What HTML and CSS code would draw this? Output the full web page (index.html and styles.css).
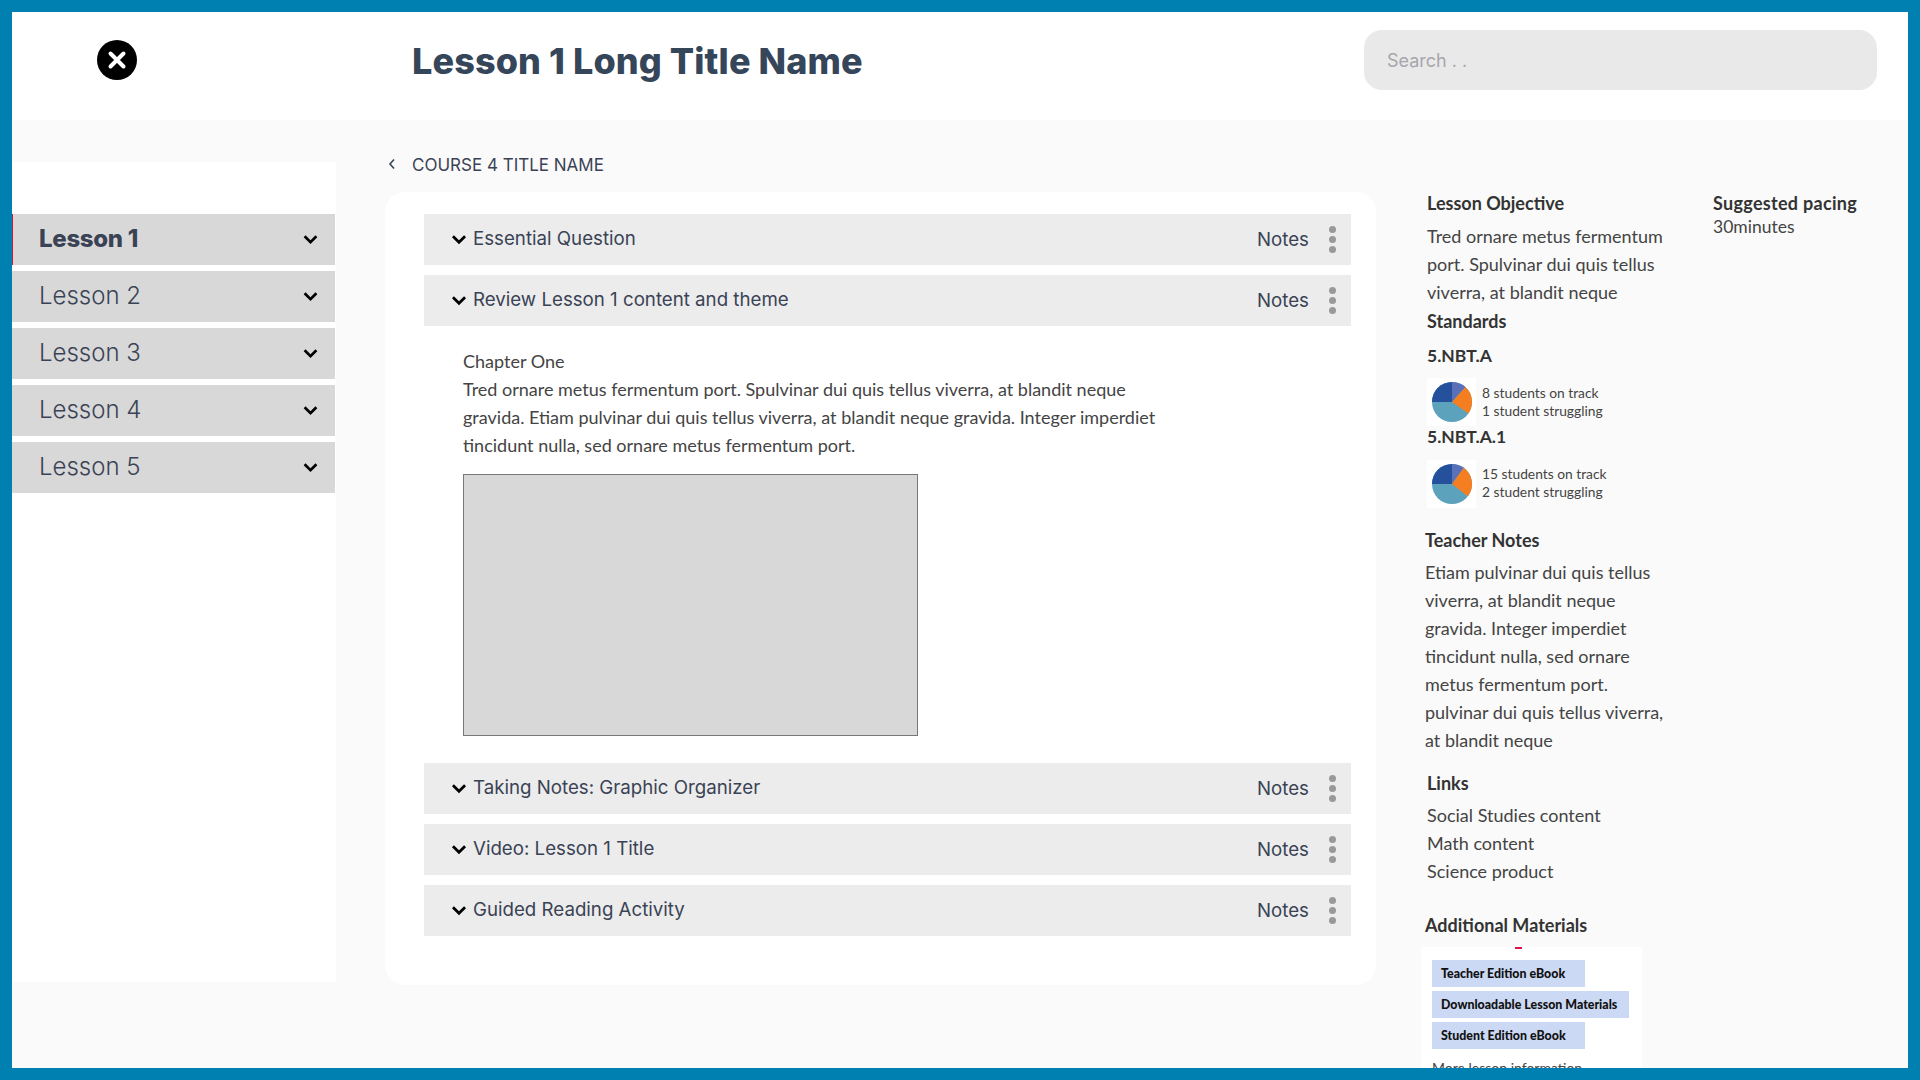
FILE: index.html
```html
<!DOCTYPE html>
<html lang="en">
<head>
<meta charset="utf-8">
<title>Lesson 1 Long Title Name</title>
<link rel="stylesheet" href="styles.css">
</head>
<body>
<div class="frame">
  <header class="topbar">
    <div class="close-wrap">
      <svg class="close-icon" viewBox="0 0 40 40"><circle cx="20" cy="20" r="20" fill="#000"/><path d="M13.5 13.5l13 13M26.5 13.5l-13 13" stroke="#fff" stroke-width="4" stroke-linecap="round"/></svg>
    </div>
    <h1 class="page-title">Lesson 1 Long Title Name</h1>
    <div class="search">Search . .</div>
  </header>
  <div class="workspace">
    <nav class="sidebar">
      <div class="lesson lesson-active"><span>Lesson 1</span><svg class="chev" viewBox="0 0 14 10"><path d="M1.5 2l5.5 5.5L12.5 2" /></svg></div>
      <div class="lesson"><span>Lesson 2</span><svg class="chev" viewBox="0 0 14 10"><path d="M1.5 2l5.5 5.5L12.5 2" /></svg></div>
      <div class="lesson"><span>Lesson 3</span><svg class="chev" viewBox="0 0 14 10"><path d="M1.5 2l5.5 5.5L12.5 2" /></svg></div>
      <div class="lesson"><span>Lesson 4</span><svg class="chev" viewBox="0 0 14 10"><path d="M1.5 2l5.5 5.5L12.5 2" /></svg></div>
      <div class="lesson"><span>Lesson 5</span><svg class="chev" viewBox="0 0 14 10"><path d="M1.5 2l5.5 5.5L12.5 2" /></svg></div>
    </nav>
    <main class="center">
      <div class="crumb">
        <svg class="crumb-chev" viewBox="0 0 8 12"><path d="M6 1.5L2 6l4 4.5"/></svg>
        <span>COURSE 4 TITLE NAME</span>
      </div>
      <section class="card">
        <div class="row"><svg class="chev row-chev" viewBox="0 0 14 10"><path d="M1.5 2l5.5 5.5L12.5 2" /></svg><span class="row-title">Essential Question</span><span class="notes">Notes</span><span class="dots"><i></i><i></i><i></i></span></div>
        <div class="row"><svg class="chev row-chev" viewBox="0 0 14 10"><path d="M1.5 2l5.5 5.5L12.5 2" /></svg><span class="row-title">Review Lesson 1 content and theme</span><span class="notes">Notes</span><span class="dots"><i></i><i></i><i></i></span></div>
        <div class="chapter">
          <p class="chapter-text">Chapter One<br>Tred ornare metus fermentum port. Spulvinar dui quis tellus viverra, at blandit neque<br>gravida. Etiam pulvinar dui quis tellus viverra, at blandit neque gravida. Integer imperdiet<br>tincidunt nulla, sed ornare metus fermentum port.</p>
          <div class="placeholder"></div>
        </div>
        <div class="row"><svg class="chev row-chev" viewBox="0 0 14 10"><path d="M1.5 2l5.5 5.5L12.5 2" /></svg><span class="row-title">Taking Notes: Graphic Organizer</span><span class="notes">Notes</span><span class="dots"><i></i><i></i><i></i></span></div>
        <div class="row"><svg class="chev row-chev" viewBox="0 0 14 10"><path d="M1.5 2l5.5 5.5L12.5 2" /></svg><span class="row-title">Video: Lesson 1 Title</span><span class="notes">Notes</span><span class="dots"><i></i><i></i><i></i></span></div>
        <div class="row"><svg class="chev row-chev" viewBox="0 0 14 10"><path d="M1.5 2l5.5 5.5L12.5 2" /></svg><span class="row-title">Guided Reading Activity</span><span class="notes">Notes</span><span class="dots"><i></i><i></i><i></i></span></div>
      </section>
    </main>
    <aside class="details">
      <div class="details-top">
        <div class="objective">
          <h2 class="label">Lesson Objective</h2>
          <p class="copy">Tred ornare metus fermentum<br>port. Spulvinar dui quis tellus<br>viverra, at blandit neque</p>
          <h2 class="label standards">Standards</h2>
          <h3 class="code code-first">5.NBT.A</h3>
          <div class="stat">
            <div class="pie-box"><svg class="pie" viewBox="0 0 40 40"><circle cx="20" cy="20" r="20" fill="#5da2bd"/><path d="M20 20V0A20 20 0 0 1 33.4 5.1Z" fill="#5a70b8"/><path d="M20 20L33.4 5.1A20 20 0 0 1 36.4 31.5Z" fill="#f57f20"/><path d="M20 20H0A20 20 0 0 1 20 0Z" fill="#25509c"/></svg></div>
            <div class="stat-text">8 students on track<br>1 student struggling</div>
          </div>
          <h3 class="code">5.NBT.A.1</h3>
          <div class="stat stat-second">
            <div class="pie-box"><svg class="pie" viewBox="0 0 40 40"><circle cx="20" cy="20" r="20" fill="#5da2bd"/><path d="M20 20V0A20 20 0 0 1 31.8 3.8Z" fill="#5a70b8"/><path d="M20 20L31.8 3.8A20 20 0 0 1 35.8 32.3Z" fill="#f57f20"/><path d="M20 20H0A20 20 0 0 1 20 0Z" fill="#25509c"/></svg></div>
            <div class="stat-text">15 students on track<br>2 student struggling</div>
          </div>
        </div>
        <div class="pacing">
          <h2 class="label label-wide">Suggested pacing</h2>
          <p class="pacing-value">30minutes</p>
        </div>
      </div>
      <div class="notes-block">
        <h2 class="label">Teacher Notes</h2>
        <p class="copy copy-tight">Etiam pulvinar dui quis tellus<br>viverra, at blandit neque<br>gravida. Integer imperdiet<br>tincidunt nulla, sed ornare<br>metus fermentum port.<br>pulvinar dui quis tellus viverra,<br>at blandit neque</p>
      </div>
      <div class="links-block">
        <h2 class="label">Links</h2>
        <p class="copy copy-tight">Social Studies content<br>Math content<br>Science product</p>
      </div>
      <div class="materials-block">
        <h2 class="label">Additional Materials</h2>
        <div class="materials">
          <span class="tick"></span>
          <div class="mat-btn">Teacher Edition eBook</div>
          <div class="mat-btn mat-wide">Downloadable Lesson Materials</div>
          <div class="mat-btn">Student Edition eBook</div>
          <p class="mat-more">More lesson information</p>
        </div>
      </div>
    </aside>
  </div>
</div>
</body>
</html>
```
FILE: styles.css
```css
* { box-sizing: border-box; }
html, body { margin: 0; padding: 0; height: 100%; overflow: hidden; }
body { font-family: "Lato", "Open Sans", sans-serif; color: #444; }
h1, h2, h3, p { margin: 0; }

.frame { width: 1920px; height: 1080px; border: 12px solid #0080b0; background: #fafafa; display: flex; flex-direction: column; overflow: hidden; }

.topbar { height: 108px; flex: none; background: #fff; display: flex; align-items: center; padding-bottom: 12px; }
.close-wrap { width: 400px; padding-left: 85px; display: flex; }
.close-icon { width: 40px; height: 40px; display: block; }
.page-title { font-family: "Inter", sans-serif; font-weight: 800; font-size: 36px; letter-spacing: 0.1px; color: #36465a; line-height: 44px; width: 952px; padding-top: 2px; height: 46px; white-space: nowrap; }
.search { width: 513px; height: 60px; background: #e9e9ea; border-radius: 18px; color: #a6a6ab; font-family: "Inter", sans-serif; font-size: 18px; display: flex; align-items: center; padding-left: 23px; }

.workspace { flex: 1; display: flex; min-height: 0; }

.sidebar { width: 324px; height: 820px; flex: none; margin-top: 42px; background: #fff; padding-top: 52px; display: flex; flex-direction: column; gap: 6px; }
.lesson { height: 51px; width: 323px; flex: none; background: #d8d8d8; display: flex; align-items: center; justify-content: space-between; padding: 0 17px 2px 27px; font-family: "Inter", sans-serif; font-weight: 300; font-size: 24px; color: #3a4355; }
.lesson .chev { margin-top: 2px; }
.lesson-active { font-weight: 800; letter-spacing: -0.3px; border-left: 1px solid #d8173c; padding-left: 26px; }
.chev { width: 15px; height: 11px; flex: none; fill: none; stroke: #000; stroke-width: 2.5; }

.center { width: 991px; flex: none; margin-left: 49px; display: flex; flex-direction: column; }
.crumb { height: 72px; flex: none; display: flex; align-items: center; gap: 16px; padding: 18px 0 0 3px; font-family: "Inter", sans-serif; font-size: 17px; color: #3a4355; }
.crumb-chev { width: 8px; height: 12px; fill: none; stroke: #3a4355; stroke-width: 1.6; margin-top: -3px; }
.card { background: #fff; border-radius: 20px; padding: 22px 25px 0 39px; height: 793px; display: flex; flex-direction: column; gap: 10px; }
.row { height: 51px; flex: none; background: #ececec; display: flex; align-items: center; padding: 0 15px 0 27px; font-family: "Inter", sans-serif; font-size: 18.7px; color: #3a4355; }
.row-chev { margin-right: 6px; width: 16px; }
.row-title { flex: 1; padding-bottom: 2px; }
.notes { width: 51px; margin-right: 21px; white-space: nowrap; }
.dots { display: flex; flex-direction: column; gap: 3px; width: 7px; }
.dots i { display: block; width: 7px; height: 7px; border-radius: 50%; background: #999; }

.chapter { padding: 11px 0 17px 39px; }
.chapter-text { font-size: 18px; line-height: 28px; color: #444; white-space: nowrap; }
.placeholder { width: 455px; height: 262px; margin-top: 15px; background: #d8d8d8; border: 1px solid #777; }

.details { flex: 1; margin-left: 51px; padding-top: 72px; min-width: 0; }
.details-top { display: flex; }
.objective { width: 286px; flex: none; }
.label { font-size: 18px; font-weight: 700; line-height: 22px; color: #333; white-space: nowrap; }
.label-wide { letter-spacing: 0.3px; }
.copy { font-size: 18px; line-height: 28px; color: #444; margin-top: 8px; white-space: nowrap; }
.copy-tight { margin-top: 7px; }
.standards { margin-top: 4px; }
.code { font-size: 17.5px; font-weight: 700; line-height: 22px; color: #333; }
.code-first { margin-top: 13px; }
.stat { display: flex; align-items: center; gap: 6px; height: 48px; margin-top: 11px; }
.stat-second { margin-top: 12px; }
.stat-second .stat-text { padding-bottom: 3px; }
.pie-box { width: 49px; height: 48px; background: #fff; display: flex; align-items: center; justify-content: center; flex: none; }
.pie { width: 40px; height: 40px; display: block; }
.stat-text { font-size: 13.8px; line-height: 18px; color: #444; white-space: nowrap; }
.pacing-value { font-size: 17.5px; line-height: 22px; color: #444; margin-top: 2px; }

.notes-block { margin: 0 0 0 -2px; padding-top: 21px; }
.links-block { padding-top: 18px; }
.materials-block { margin-left: -2px; padding-top: 29px; }
.materials { position: relative; margin: 11px 0 0 -4px; width: 221px; height: 160px; background: #fff; padding: 13px 0 0 11px; }
.tick { position: absolute; left: 94px; top: 0; width: 7px; height: 2px; background: #e0104a; }
.mat-btn { width: 153px; height: 27px; margin-bottom: 4px; background: #ccd9f5; font-size: 12.4px; font-weight: 900; color: #111; line-height: 27px; padding-left: 9px; white-space: nowrap; }
.mat-wide { width: 197px; }
.mat-more { font-size: 14px; color: #444; margin-top: 10px; white-space: nowrap; }
```
